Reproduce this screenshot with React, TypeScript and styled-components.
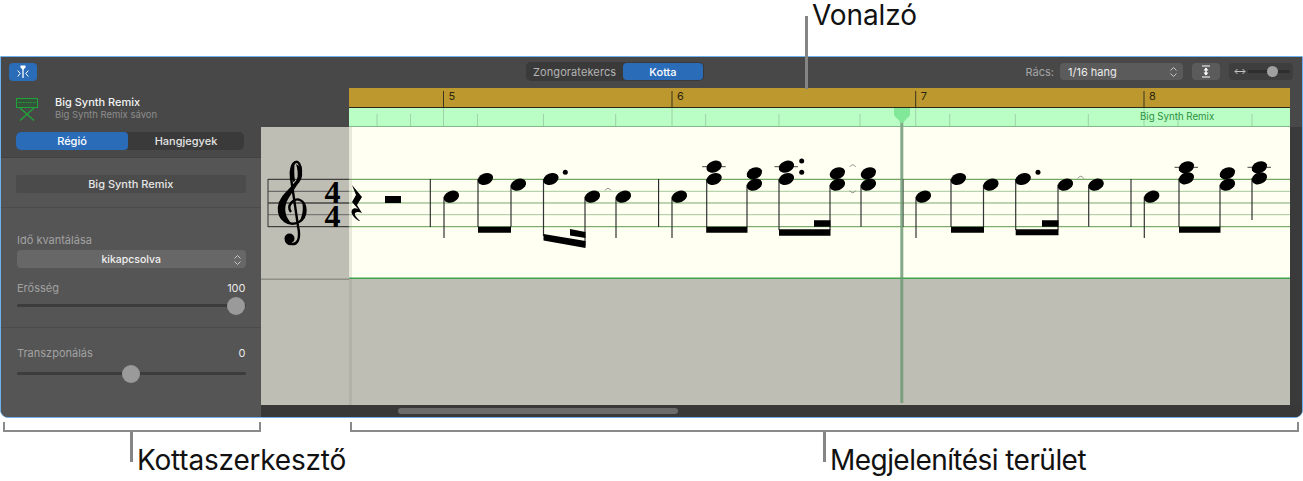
import React from 'react';
import styled, { createGlobalStyle } from 'styled-components';

const Global = createGlobalStyle`
  html, body { margin: 0; padding: 0; background: #fff; }
  body { font-family: Inter, "Liberation Sans", sans-serif; overflow: hidden; }
  * { box-sizing: border-box; }
`;

const Page = styled.div`
  width: 1303px;
  height: 481px;
  position: relative;
`;

const TopCallout = styled.div`
  height: 56px;
  padding-left: 812px;
`;

const CalloutText = styled.div<{ $spacing?: number }>`
  font-size: 28px;
  line-height: 30px;
  color: #111;
  letter-spacing: ${p => p.$spacing ?? -0.1}px;
`;

const TopLine = styled.div`
  position: absolute;
  left: 805px;
  top: 16px;
  width: 3px;
  height: 73px;
  background: #858585;
`;

const Window = styled.div`
  height: 362px;
  border: 1.5px solid #6eb1ee;
  border-radius: 1px 1px 8px 8px;
  background: #484848;
  display: flex;
  flex-direction: column;
  overflow: hidden;
`;

const Toolbar = styled.div`
  height: 31px;
  flex: none;
  display: grid;
  grid-template-columns: 514px auto 1fr;
  align-items: center;
  padding: 0 9px 2px 8px;
`;

const ToolGroup = styled.div`
  display: flex;
  align-items: center;
  justify-content: flex-end;
  gap: 9px;
`;

const LeftTools = styled.div`
  display: flex;
`;

const CatchButton = styled.div`
  width: 28px;
  height: 18px;
  border-radius: 4px;
  background: #2a6cb8;
  display: flex;
  align-items: center;
  justify-content: center;
`;

const Segmented = styled.div<{ $w: number; $h: number }>`
  width: ${p => p.$w}px;
  height: ${p => p.$h}px;
  display: flex;
  background: #3a3a3a;
  border-radius: 5px;
  overflow: hidden;
`;

const Segment = styled.div<{ $on?: boolean; $w?: number }>`
  ${p => (p.$w ? `width: ${p.$w}px;` : 'flex: 1;')}
  display: flex;
  align-items: center;
  justify-content: center;
  border-radius: 4px;
  font-size: 11px;
  font-weight: 500;
  color: ${p => (p.$on ? '#fff' : '#e4e4e4')};
  background: ${p => (p.$on ? '#2a6cb8' : 'transparent')};
`;

const ModeSwitch = styled(Segmented)`
  padding: 1px 1px 1px 7px;
  margin-left: 3px;
`;

const DimSegment = styled(Segment)`
  color: #b4b4b4;
  font-weight: 400;
  letter-spacing: 0.1px;
  justify-content: flex-start;
`;

const GridLabel = styled.span`
  font-size: 11px;
  color: #a6a6a6;
  margin-right: -3px;
`;

const GridSelect = styled.div`
  width: 123px;
  height: 17px;
  border-radius: 4px;
  background: #5b5b5b;
  display: flex;
  align-items: center;
  justify-content: space-between;
  padding: 0 5px 0 8px;
  font-size: 11px;
  color: #ececec;
`;

const FitButton = styled.div`
  width: 28px;
  height: 17px;
  border-radius: 4px;
  background: #5b5b5b;
  display: flex;
  align-items: center;
  justify-content: center;
`;

const ZoomBox = styled.div`
  width: 64px;
  height: 17px;
  border-radius: 4px;
  background: #3e3e3e;
  display: flex;
  align-items: center;
  padding: 0 3px 0 5px;
  gap: 2px;
`;

const ZoomTrack = styled.div`
  flex: 1;
  height: 3px;
  border-radius: 2px;
  background: #2e2e2e;
  position: relative;
`;

const ZoomKnob = styled.div`
  position: absolute;
  left: 19px;
  top: -4px;
  width: 11px;
  height: 11px;
  border-radius: 50%;
  background: #a0a0a0;
`;

const Body = styled.div`
  flex: 1;
  display: flex;
  min-height: 0;
`;

const Inspector = styled.div`
  width: 259.5px;
  flex: none;
  display: flex;
  flex-direction: column;
  background: #555;
`;

const InspectorHead = styled.div`
  height: 70px;
  background: #484848;
  border-bottom: 1px solid #424242;
  padding: 8px 16px 0 15px;
`;

const TrackRow = styled.div`
  display: flex;
  align-items: center;
  gap: 16px;
  height: 26px;
  margin-bottom: 10px;
`;

const TrackName = styled.div`
  font-size: 11px;
  font-weight: 500;
  line-height: 13px;
  color: #f2f2f2;
  margin-top: -1px;
`;

const TrackSub = styled.div`
  font-size: 9.5px;
  line-height: 12px;
  color: #8d8d8d;
`;

const NameSection = styled.div`
  height: 50px;
  border-bottom: 1px solid #4b4b4b;
  padding: 17px 15px 0 15px;
`;

const NameField = styled.div`
  height: 18px;
  background: #4b4b4b;
  border-radius: 2px;
  display: flex;
  align-items: center;
  justify-content: center;
  font-size: 11px;
  font-weight: 500;
  color: #e6e6e6;
`;

const ControlSection = styled.div<{ $h: number; $top: number }>`
  height: ${p => p.$h}px;
  padding: ${p => p.$top}px 15px 0 16px;
  border-bottom: 1px solid #4b4b4b;
`;

const FreeSection = styled(ControlSection)`
  border-bottom: none;
`;

const FieldLabel = styled.div`
  font-size: 11px;
  line-height: 14px;
  color: #a2a2a2;
`;

const QuantizeSelect = styled.div`
  position: relative;
  height: 18px;
  margin: 3px 0 13px;
  border-radius: 4px;
  background: #676767;
  display: flex;
  align-items: center;
  justify-content: center;
  font-size: 10.5px;
  font-weight: 500;
  color: #f0f0f0;
`;

const SelectArrows = styled.span`
  position: absolute;
  right: 4px;
  top: 4px;
  display: flex;
`;

const ValueRow = styled.div`
  display: flex;
  justify-content: space-between;
  align-items: center;
`;

const ValueText = styled.span`
  font-size: 11px;
  line-height: 14px;
  color: #e8e8e8;
`;

const SliderTrack = styled.div<{ $mt: number }>`
  position: relative;
  height: 3px;
  margin-top: ${p => p.$mt}px;
  border-radius: 2px;
  background: #3c3c3c;
`;

const SliderKnob = styled.div`
  position: absolute;
  top: -7.5px;
  width: 18px;
  height: 18px;
  margin-left: -9px;
  border-radius: 50%;
  background: #9a9a9a;
`;

const Editor = styled.div`
  flex: 1;
  min-width: 0;
  display: flex;
  flex-direction: column;
  background: #484848;
`;

const RulerRow = styled.div`
  height: 39px;
  flex: none;
  padding-left: 88px;
  display: flex;
`;

const ScrollCorner = styled.div`
  width: 13px;
  flex: none;
  background: #484848;
`;

const Drawing = styled.svg`
  display: block;
  flex: none;
`;

const ScoreRow = styled.div`
  height: 278px;
  flex: none;
  display: flex;
`;

const VScroll = styled.div`
  flex: 1;
  background: #3a3a3a;
`;

const HScroll = styled.div`
  flex: 1;
  background: #383838;
  padding: 3px 0 0 137px;
`;

const HThumb = styled.div`
  width: 280px;
  height: 6px;
  border-radius: 3px;
  background: #6b6b6b;
`;

const BottomRow = styled.div`
  display: flex;
  padding: 3.5px 0 0 3px;
`;

const Callout = styled.div<{ $w: number; $stem: number }>`
  width: ${p => p.$w}px;
  --stem: ${p => p.$stem}px;
`;

const Bracket = styled.div`
  height: 10px;
  border: 2.5px solid #8a8a8a;
  border-top: none;
`;

const LabelRow = styled.div`
  display: flex;
  gap: 4px;
  margin-left: var(--stem);
`;

const Stem = styled.div`
  width: 3px;
  height: 30px;
  flex: none;
  background: #858585;
`;

const BottomText = styled(CalloutText)`
  margin-top: 13px;
  white-space: nowrap;
`;

const LeftCallout = styled(Callout)`
  margin-right: 89px;
`;

const Arrows = () => (
  <svg width="9" height="12" viewBox="0 0 9 12" fill="none" stroke="#c8c8c8" strokeWidth="1">
    <path d="M1.5 4.5 4.5 1.5 7.5 4.5M1.5 7.5 4.5 10.5 7.5 7.5" />
  </svg>
);

const CatchIcon = () => (
  <svg width="12" height="13" viewBox="0 0 12 13" fill="none" stroke="#fff" strokeWidth="1">
    <path d="M6 3v10" strokeWidth="1.3" />
    <path d="M3.5 0.5h5v2L6 5 3.5 2.5z" fill="#fff" stroke="none" />
    <path d="M0.7 5.5 3.2 8.5 0.7 11.5M11.3 5.5 8.8 8.5 11.3 11.5" />
  </svg>
);

const FitIcon = () => (
  <svg width="12" height="13" viewBox="0 0 12 13" fill="#fff" stroke="#fff">
    <path d="M2 1h8M2 12h8" strokeWidth="1" />
    <path d="M6 3v7" strokeWidth="1.4" />
    <path d="M3.5 5.5 6 2.5 8.5 5.5zM3.5 7.5 6 10.5 8.5 7.5z" stroke="none" />
  </svg>
);

const WidthIcon = () => (
  <svg width="12" height="9" viewBox="0 0 12 9" fill="none" stroke="#c4c4c4" strokeWidth="1">
    <path d="M1 4.5h10M3.5 2 1 4.5 3.5 7M8.5 2 11 4.5 8.5 7" />
  </svg>
);

const KeyboardIcon = () => (
  <svg width="23" height="24" viewBox="0 0 23 24" fill="none" stroke="#22a33a" strokeWidth="1">
    <rect x="0.5" y="1.5" width="21" height="9" fill="#33533a" />
    <path d="M2 5.5h18" strokeDasharray="1.5 1" />
    <path d="M4 11 18 23.5M18 11 4 23.5" strokeWidth="1.4" />
  </svg>
);

const rulerBars = [
  { x: 443.5, n: 5 },
  { x: 672, n: 6 },
  { x: 915.7, n: 7 },
  { x: 1144, n: 8 },
];
const beatTicks = [377, 410.5, 477.5, 543.5, 615.7, 705.7, 779, 860, 949.7, 1015.3, 1088.3, 1178, 1252];

const Ruler = () => (
  <Drawing width="941" height="39" viewBox="349 88 941 39">
    <rect x="349" y="88" width="941" height="19.5" fill="#bd982e" />
    <rect x="349" y="107" width="941" height="1" fill="#2e2a1a" />
    <rect x="349" y="108" width="941" height="19" fill="#bbfec5" />
    <rect x="349" y="126" width="941" height="1" fill="#82b98c" />
    {rulerBars.map(b => (
      <g key={b.n}>
        <line x1={b.x} x2={b.x} y1="91" y2="107" stroke="#3a3420" strokeWidth="1" />
        <line x1={b.x} x2={b.x} y1="108" y2="126" stroke="#9ed2a8" strokeWidth="1" />
        <text x={b.x + 5} y="100" fontSize="11" fontFamily="Inter, sans-serif" fill="#2a2510">
          {b.n}
        </text>
      </g>
    ))}
    {beatTicks.map(x => (
      <line key={x} x1={x} x2={x} y1="114" y2="126" stroke="#9ed2a8" strokeWidth="1" />
    ))}
    <text x="1140" y="120" fontSize="9.7" fontFamily="Inter, sans-serif" fill="#2c8f42">
      Big Synth Remix
    </text>
    <rect x="900.3" y="120" width="3" height="7" fill="#7fa884" />
    <path d="M894 108h16v6.5q0 1-1 2L902 123.5 895 116.5q-1-1-1-2z" fill="#80e898" />
  </Drawing>
);

const staff = [
  { y: 179.3, w: 1, c: '#4f8f3c', h: '#222' },
  { y: 191.3, w: 1, c: '#a5c79a', h: '#555' },
  { y: 203, w: 1.4, c: '#a5c79a', h: '#444' },
  { y: 214.7, w: 1, c: '#a5c79a', h: '#666' },
  { y: 226.7, w: 1, c: '#5f9b4d', h: '#222' },
];

const barLines = [430.3, 658.6, 903, 1131];

type Note = { x: number; ys: number[]; to: number; ledger?: boolean };

// x is the stem, the head sits 7px to its right
const notes: Note[] = [
  { x: 444, ys: [196.7], to: 238 },
  { x: 478, ys: [179], to: 227 },
  { x: 511, ys: [184.7], to: 227 },
  { x: 543.5, ys: [179], to: 236 },
  { x: 585, ys: [196.7], to: 246 },
  { x: 616, ys: [196.7], to: 238 },
  { x: 672, ys: [196.7], to: 238 },
  { x: 706.7, ys: [166.7, 179], to: 227, ledger: true },
  { x: 747, ys: [173.3, 184.7], to: 227 },
  { x: 779, ys: [166.7, 179], to: 230, ledger: true },
  { x: 830, ys: [173.3, 184.7], to: 230 },
  { x: 861, ys: [173.3, 184.7], to: 226.7 },
  { x: 916, ys: [196.7], to: 238 },
  { x: 951, ys: [179], to: 227 },
  { x: 983.5, ys: [184.7], to: 227 },
  { x: 1015.7, ys: [179], to: 230 },
  { x: 1058, ys: [184.7], to: 230 },
  { x: 1088.7, ys: [184.7], to: 226.7 },
  { x: 1144.3, ys: [196.7], to: 238 },
  { x: 1179, ys: [167.3, 178.3], to: 227, ledger: true },
  { x: 1220, ys: [173.3, 184.7], to: 227 },
  { x: 1252, ys: [167.3, 178.3], to: 220, ledger: true },
];

const beams = [
  'M478 226.7H511V232.7H478Z',
  'M543.5 234 585.5 241V248L543.5 240.6Z',
  'M570 229 585.5 232V238L570 235.5Z',
  'M706.2 226.7H747.5V232.7H706.2Z',
  'M779 229.3H830.5V235.7H779Z',
  'M814 220.3H830.5V226.7H814Z',
  'M951 226.7H984V232.7H951Z',
  'M1015.7 229.3H1058.5V235.3H1015.7Z',
  'M1042 220.3H1058.5V226.7H1042Z',
  'M1179 226.7H1220.5V232.7H1179Z',
];

const dots = [
  [565.3, 172.3],
  [801.7, 161],
  [801.7, 172.3],
  [1038, 172.3],
];

const ties = [
  'M605 190.5Q608 186 611 190.5',
  'M849.7 167Q852.7 162.5 855.7 167',
  'M849.7 190.5Q852.7 195 855.7 190.5',
  'M1077.7 178.5Q1080.7 174 1083.7 178.5',
];

const Score = () => (
  <Drawing width="1029" height="278" viewBox="261 127 1029 278">
    <rect x="261" y="127" width="1029" height="278" fill="#bfbeb4" />
    <rect x="349" y="127" width="941" height="151" fill="#fffff2" />
    <rect x="261" y="278.5" width="88" height="1.5" fill="#8f9088" />
    <rect x="349" y="277.5" width="941" height="1.5" fill="#3fa34f" />
    {staff.map(l => (
      <g key={l.y}>
        <line x1="268" x2="349" y1={l.y} y2={l.y} stroke={l.h} strokeWidth={l.w} />
        <line x1="349" x2="1290" y1={l.y} y2={l.y} stroke={l.c} strokeWidth={l.w} />
      </g>
    ))}
    <line x1="268" x2="268" y1="179" y2="227" stroke="#333" strokeWidth="1" />
    <path
      d="M291 212C286 206 294 197 300 200C307 203 308 217 299 222C289 227 278 220 279 207C280 193 301 185 301 171C301 165 298 161 296 162C292 163 290 170 291 178L298 226C301 240 297 245 291 244C288 244 286 242 286 240"
      fill="none"
      stroke="#000"
      strokeWidth="2.4"
    />
    <path d="M288 223C279 217 277 208 280 201C284 193 293 189 298 183C294 191 288 197 286 204C284 211 286 218 292 224Z" fill="#000" />
    <path d="M299 166C304 172 303 179 297 185L293 188C298 181 299 174 296 164Z" fill="#000" />
    <path d="M293 182C289 172 290 165 295 161C294 168 294 174 295 181Z" fill="#000" />
    <path d="M302 202C308 209 306 219 299 223C302 216 304 210 302 202Z" fill="#000" />
    <circle cx="289.5" cy="238.5" r="5" fill="#000" />
    <text x="332.5" y="203" fontSize="32" fontWeight="700" fontFamily="Liberation Serif, serif" textAnchor="middle" fill="#000">
      4
    </text>
    <text x="332.5" y="227" fontSize="32" fontWeight="700" fontFamily="Liberation Serif, serif" textAnchor="middle" fill="#000">
      4
    </text>
    <path
      d="M352 185L362 197L357 205L362 213C358 211 354 212 355 215C356 217 358 219 360 221L359 221C354 218 350 213 352 210C353 208 356 208 358 209L352 202L356 195Z"
      fill="#000"
    />
    <rect x="385" y="196" width="16" height="7" fill="#000" />
    {barLines.map(x => (
      <line key={x} x1={x} x2={x} y1="179" y2="227" stroke="#222" strokeWidth="1.1" />
    ))}
    {notes.map(n => (
      <g key={n.x}>
        <line x1={n.x} x2={n.x} y1={n.ys[n.ys.length - 1]} y2={n.to} stroke="#333" strokeWidth="1.2" />
        {n.ledger && <line x1={n.x - 4.5} x2={n.x + 19} y1={n.ys[0]} y2={n.ys[0]} stroke="#444" strokeWidth="1" />}
        {n.ys.map(y => (
          <ellipse key={y} cx={n.x + 7.4} cy={y} rx="8" ry="5.7" transform={`rotate(-22 ${n.x + 7.4} ${y})`} fill="#000" />
        ))}
      </g>
    ))}
    {beams.map(d => (
      <path key={d} d={d} fill="#000" />
    ))}
    {dots.map(([x, y]) => (
      <circle key={y + x} cx={x} cy={y} r="2.5" fill="#000" />
    ))}
    {ties.map(d => (
      <path key={d} d={d} fill="none" stroke="#777" strokeWidth="0.8" />
    ))}
    <rect x="349" y="127" width="3" height="278" fill="#7d7d72" opacity="0.18" />
    <rect x="900.3" y="127" width="3" height="276" fill="#6f9a76" opacity="0.85" />
  </Drawing>
);

export default function App() {
  return (
    <Page>
      <Global />
      <TopCallout>
        <CalloutText>Vonalzó</CalloutText>
      </TopCallout>
      <TopLine />
      <Window>
        <Toolbar>
          <LeftTools>
            <CatchButton>
              <CatchIcon />
            </CatchButton>
          </LeftTools>
          <ModeSwitch $w={178} $h={19}>
            <DimSegment>Zongoratekercs</DimSegment>
            <Segment $on $w={80}>Kotta</Segment>
          </ModeSwitch>
          <ToolGroup>
            <GridLabel>Rács:</GridLabel>
            <GridSelect>
              1/16 hang
              <Arrows />
            </GridSelect>
            <FitButton>
              <FitIcon />
            </FitButton>
            <ZoomBox>
              <WidthIcon />
              <ZoomTrack>
                <ZoomKnob />
              </ZoomTrack>
            </ZoomBox>
          </ToolGroup>
        </Toolbar>
        <Body>
          <Inspector>
            <InspectorHead>
              <TrackRow>
                <KeyboardIcon />
                <div>
                  <TrackName>Big Synth Remix</TrackName>
                  <TrackSub>Big Synth Remix sávon</TrackSub>
                </div>
              </TrackRow>
              <Segmented $w={228} $h={18}>
                <Segment $on $w={112}>Régió</Segment>
                <Segment>Hangjegyek</Segment>
              </Segmented>
            </InspectorHead>
            <NameSection>
              <NameField>Big Synth Remix</NameField>
            </NameSection>
            <ControlSection $h={120} $top={25}>
              <FieldLabel>Idő kvantálása</FieldLabel>
              <QuantizeSelect>
                kikapcsolva
                <SelectArrows>
                  <Arrows />
                </SelectArrows>
              </QuantizeSelect>
              <ValueRow>
                <FieldLabel>Erősség</FieldLabel>
                <ValueText>100</ValueText>
              </ValueRow>
              <SliderTrack $mt={9}>
                <SliderKnob style={{ left: `${(100 / 100) * 219}px` }} />
              </SliderTrack>
            </ControlSection>
            <FreeSection $h={88} $top={18}>
              <ValueRow>
                <FieldLabel>Transzponálás</FieldLabel>
                <ValueText>0</ValueText>
              </ValueRow>
              <SliderTrack $mt={12}>
                <SliderKnob style={{ left: '114px' }} />
              </SliderTrack>
            </FreeSection>
          </Inspector>
          <Editor>
            <RulerRow>
              <Ruler />
              <ScrollCorner />
            </RulerRow>
            <ScoreRow>
              <Score />
              <VScroll />
            </ScoreRow>
            <HScroll>
              <HThumb />
            </HScroll>
          </Editor>
        </Body>
      </Window>
      <BottomRow>
        <LeftCallout $w={258} $stem={127}>
          <Bracket />
          <LabelRow>
            <Stem />
            <BottomText $spacing={-0.2}>Kottaszerkesztő</BottomText>
          </LabelRow>
        </LeftCallout>
        <Callout $w={949} $stem={473}>
          <Bracket />
          <LabelRow>
            <Stem />
            <BottomText $spacing={-0.55}>Megjelenítési terület</BottomText>
          </LabelRow>
        </Callout>
      </BottomRow>
    </Page>
  );
}
